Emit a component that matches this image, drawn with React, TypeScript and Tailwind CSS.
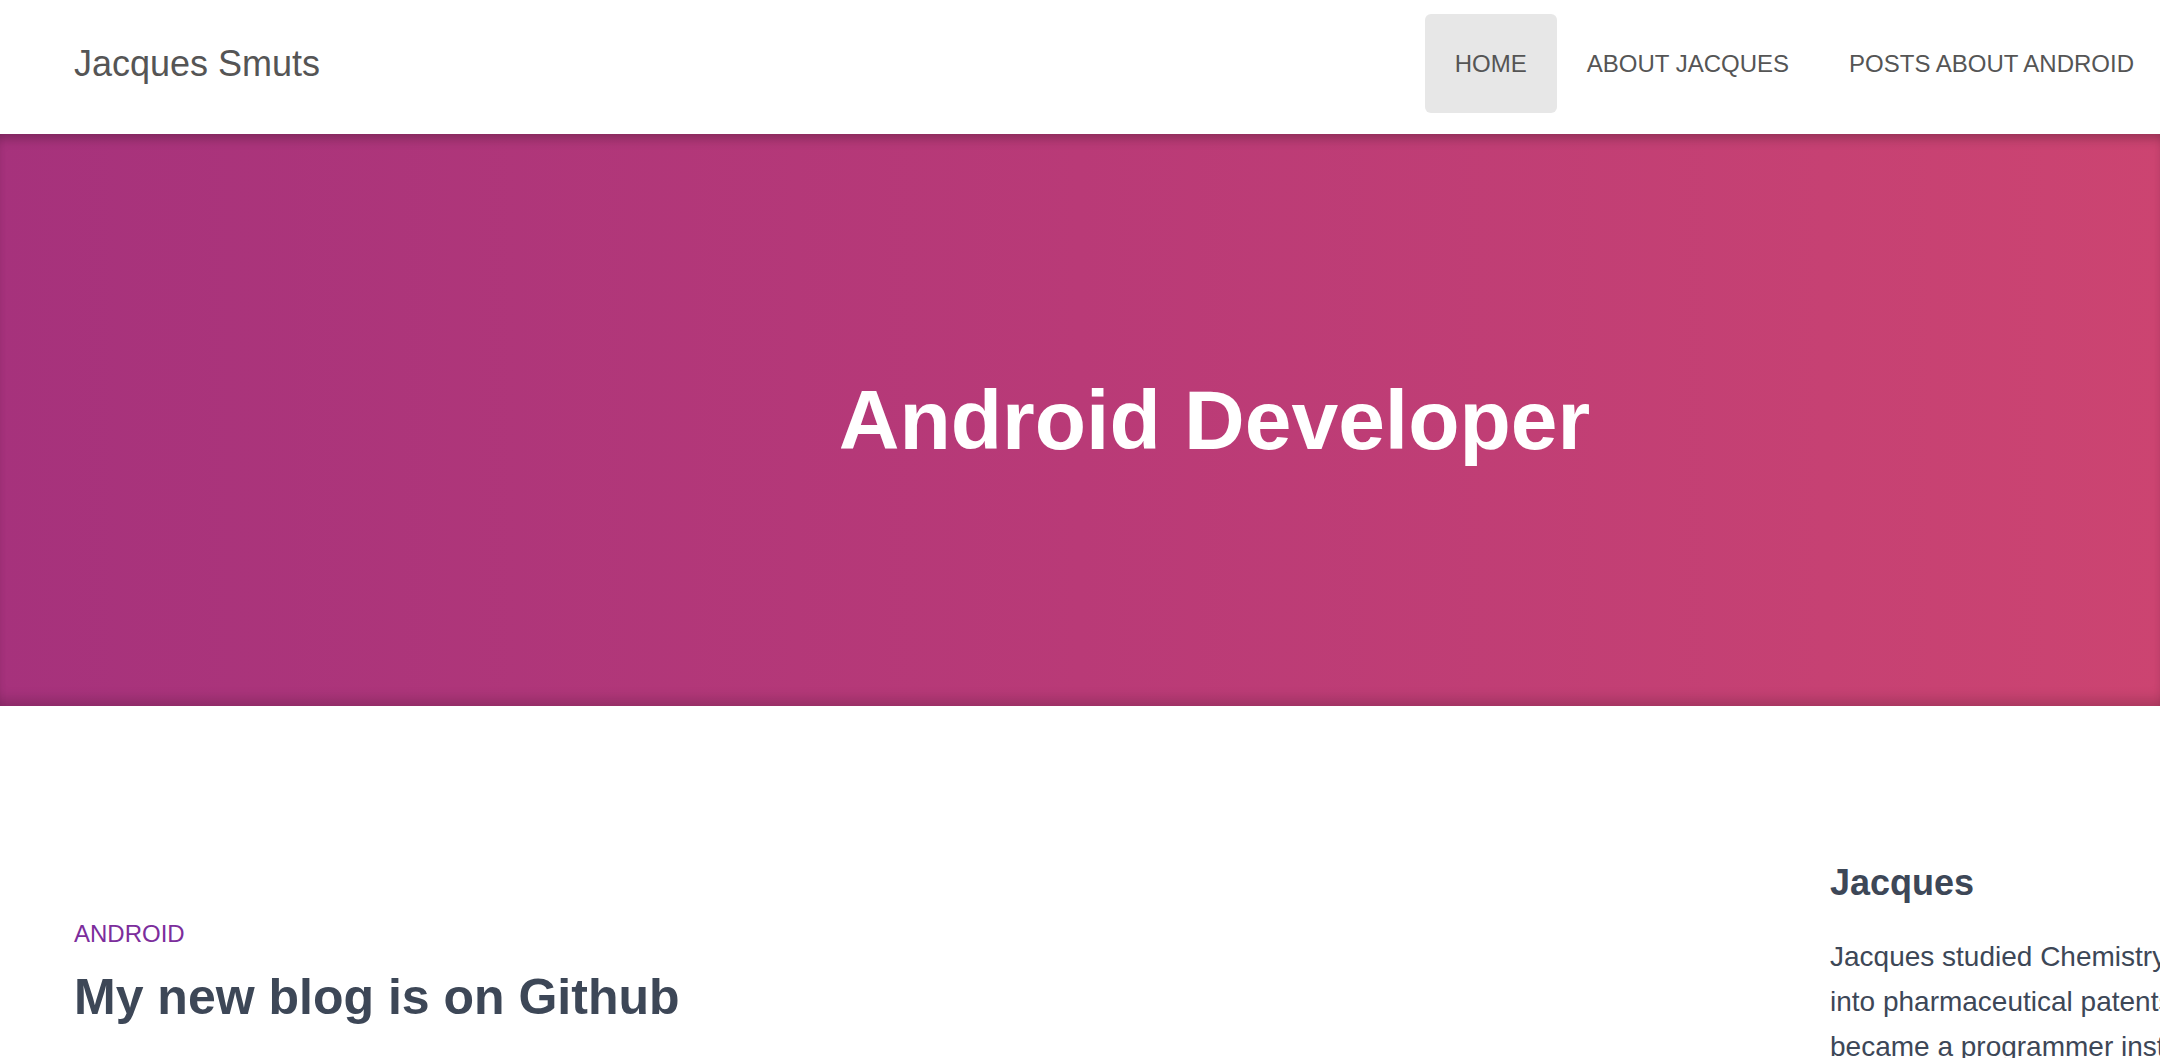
import React from "react";

export default function App() {
  const font = { fontFamily: '"Liberation Sans", Arial, Helvetica, sans-serif' };
  return (
    <div className="w-full overflow-hidden bg-white min-h-[1058px]" style={font}>
      {/* Header */}
      <header className="flex items-center h-[134px] pl-[74px] pb-[7px] bg-white">
        <a className="text-[36px] leading-none text-[#555555] whitespace-nowrap">Jacques Smuts</a>
        <nav className="ml-auto mr-[-4px] flex items-center">
          <a className="flex items-center h-[99px] px-[30px] rounded-md bg-[#e7e7e7] text-[24px] leading-none text-[#555555] whitespace-nowrap">
            HOME
          </a>
          <a className="flex items-center h-[99px] px-[30px] text-[24px] leading-none text-[#555555] whitespace-nowrap">
            ABOUT JACQUES
          </a>
          <a className="flex items-center h-[99px] px-[30px] text-[24px] leading-none text-[#555555] whitespace-nowrap">
            POSTS ABOUT ANDROID
          </a>
        </nav>
      </header>

      {/* Hero */}
      <section className="relative h-[572px] flex items-center justify-center pl-[269px] bg-linear-to-r from-[#a6327c] via-[#b93a77] to-[#cc4471] shadow-[inset_0_10px_12px_-6px_rgba(0,0,0,0.28),inset_0_-14px_14px_-8px_rgba(0,0,0,0.18)]">
        <h1 className="text-[84px] leading-none font-bold text-white whitespace-nowrap">Android Developer</h1>
      </section>

      {/* Content */}
      <main className="flex w-[2600px] pl-[74px]">
        <article className="w-[1756px] shrink-0 pt-[216px]">
          <div className="text-[24px] leading-none text-[#7c2d9c]">ANDROID</div>
          <h2 className="mt-[26px] text-[50px] leading-none font-bold text-[#3d4757] whitespace-nowrap">
            My new blog is on Github
          </h2>
        </article>
        <aside className="w-[600px] shrink-0 pt-[159px]">
          <h3 className="text-[36px] leading-none font-bold text-[#3d4757]">Jacques</h3>
          <p className="mt-[33px] text-[28px] leading-[45px] text-[#3d4757] whitespace-nowrap">
            Jacques studied Chemistry and then went
            <br />
            into pharmaceutical patents, and later
            <br />
            became a programmer instead.
          </p>
        </aside>
      </main>
    </div>
  );
}
